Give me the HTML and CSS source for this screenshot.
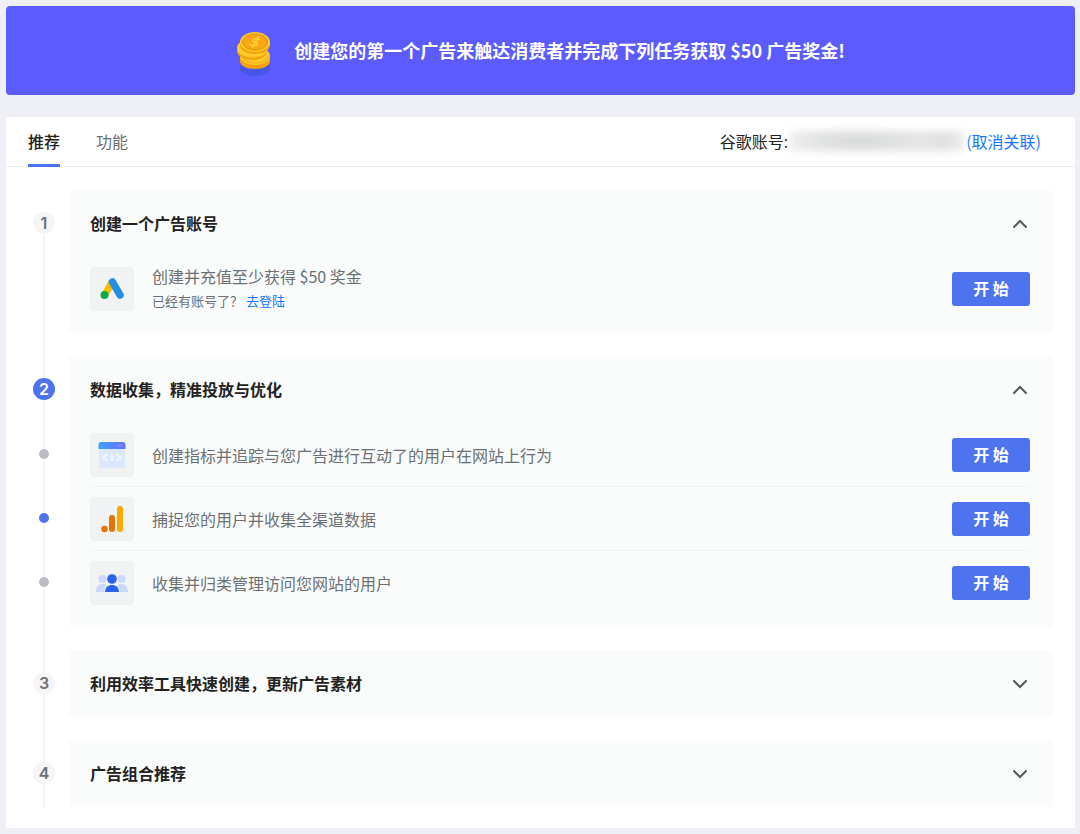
FILE: index.html
```html
<!DOCTYPE html>
<html lang="zh-CN">
<head>
    <meta charset="UTF-8">
    <meta name="viewport" content="width=device-width, initial-scale=1.0">
    <title>广告任务</title>
    <link rel="stylesheet" href="styles.css">
</head>
<body>

    <header class="banner">
        <svg class="coins" width="36" height="52" viewBox="-1 -6 36 52" aria-hidden="true">
            <ellipse cx="18" cy="37" rx="15" ry="8" fill="#4656e8"/>
            <path d="M3 26v4c0 4.500 6.500 8 15 8s15-3.500 15-8v-5z" fill="#f9a10a"/>
            <ellipse cx="18" cy="25" rx="15" ry="9" fill="#fdc92b"/>
            <path d="M5 25c1.500 4 6 7 13 7s13-3 14-8" fill="none" stroke="#f9a714" stroke-width="1"/>
            <path d="M0 18v2c0 5 6.500 9 15 9s15-4 15-9v-2z" fill="#f9a10a"/>
            <ellipse cx="15.500" cy="17" rx="15.500" ry="9.500" fill="#fdc92b"/>
            <path d="M3 11v3c0 5 6.500 9 15 9s15-4 15-9v-3z" fill="#f9a10a"/>
            <ellipse cx="18" cy="11" rx="15" ry="10" fill="#fdc92b"/>
            <ellipse cx="18" cy="11" rx="12.500" ry="8" fill="#f9a714" stroke="#dd930f" stroke-width="1"/>
            <path d="M22.500 9c-1.500-2-6-1.700-6.500.6-.4 2 5 1.200 4.600 3.500-.4 2-5 2.200-7.500.2M21.500 6l-6 10" fill="none" stroke="#ffce35" stroke-width="1.600" stroke-linecap="round"/>
        </svg>
        <h1>创建您的第一个广告来触达消费者并完成下列任务获取 $50 广告奖金!</h1>
    </header>

    <main class="card">
        <div class="toolbar">
            <nav class="tabs">
                <a class="tab active" href="#recommend">推荐</a>
                <a class="tab" href="#features">功能</a>
            </nav>
            <div class="account">
                <span>谷歌账号:</span>
                <span class="account-mask"></span>
                <a href="#unlink">(取消关联)</a>
            </div>
        </div>

        <div class="steps">
            <section class="step">
                <div class="rail">
                    <div class="rail-head"><span class="number">1</span></div>
                </div>
                <div class="panel">
                    <div class="panel-head">
                        <h2>创建一个广告账号</h2>
                        <button class="toggle" type="button" aria-label="收起" aria-expanded="true">
                            <svg width="20" height="20" viewBox="0 0 20 20"><path d="M4 13l6-6 6 6"/></svg>
                        </button>
                    </div>
                    <div class="task">
                        <span class="icon">
                            <svg width="28" height="28" viewBox="0 0 28 28">
                                <path d="M13.500 8L7 19.500" stroke="#fbbc04" stroke-width="7" stroke-linecap="round"/>
                                <path d="M14.500 7L22 20" stroke="#258ee5" stroke-width="7.500" stroke-linecap="round"/>
                                <circle cx="6.500" cy="20" r="4" fill="#0cab47"/>
                            </svg>
                        </span>
                        <div class="task-text">
                            <p>创建并充值至少获得 $50 奖金</p>
                            <p class="hint">已经有账号了？ <a href="#login">去登陆</a></p>
                        </div>
                        <button class="start" type="button">开 始</button>
                    </div>
                </div>
            </section>

            <section class="step">
                <div class="rail">
                    <div class="rail-head"><span class="number current">2</span></div>
                    <div class="rail-dot"><span class="dot"></span></div>
                    <div class="rail-dot"><span class="dot current"></span></div>
                    <div class="rail-dot"><span class="dot"></span></div>
                </div>
                <div class="panel">
                    <div class="panel-head">
                        <h2>数据收集，精准投放与优化</h2>
                        <button class="toggle" type="button" aria-label="收起" aria-expanded="true">
                            <svg width="20" height="20" viewBox="0 0 20 20"><path d="M4 13l6-6 6 6"/></svg>
                        </button>
                    </div>
                    <div class="task">
                        <span class="icon">
                            <svg width="28" height="28" viewBox="0 0 28 28">
                                <defs>
                                    <linearGradient id="bar" x1="0" y1="0" x2="1" y2="0">
                                        <stop offset="0" stop-color="#42a0ff"/>
                                        <stop offset="1" stop-color="#6272fa"/>
                                    </linearGradient>
                                </defs>
                                <rect x="1" y="2" width="26" height="25" rx="3" fill="#d9e7ff"/>
                                <path d="M.500 8V4a3 3 0 0 1 3-3h21a3 3 0 0 1 3 3v4z" fill="url(#bar)"/>
                                <circle cx="20.500" cy="4.500" r="1" fill="#a99be0"/>
                                <circle cx="23.500" cy="4.500" r="1" fill="#a99be0"/>
                                <path d="M9.500 13l-4.500 3.500 4.500 3.500M14 13v7M18.500 13l4.500 3.500-4.500 3.500" fill="none" stroke="#f3f7ff" stroke-width="2"/>
                            </svg>
                        </span>
                        <div class="task-text">
                            <p>创建指标并追踪与您广告进行互动了的用户在网站上行为</p>
                        </div>
                        <button class="start" type="button">开 始</button>
                    </div>
                    <div class="task">
                        <span class="icon">
                            <svg width="28" height="28" viewBox="0 0 28 28">
                                <rect x="19" y="1" width="6" height="26" rx="3" fill="#fbab00"/>
                                <rect x="11" y="10" width="6" height="17" rx="3" fill="#e47404"/>
                                <circle cx="6.500" cy="24" r="3.200" fill="#e47404"/>
                            </svg>
                        </span>
                        <div class="task-text">
                            <p>捕捉您的用户并收集全渠道数据</p>
                        </div>
                        <button class="start" type="button">开 始</button>
                    </div>
                    <div class="task">
                        <span class="icon">
                            <svg width="32" height="20" viewBox="0 0 32 20">
                                <circle cx="6.500" cy="6" r="4" fill="#ccd9ff"/>
                                <circle cx="25.500" cy="6" r="4" fill="#ccd9ff"/>
                                <path d="M0 19c0-4.500 2.500-8 6.500-8 1.800 0 3 .6 4 1.600C8.500 14.500 8 17 8 19zM32 19c0-4.500-2.500-8-6.500-8-1.800 0-3 .6-4 1.600C23.500 14.500 24 17 24 19z" fill="#ccd9ff"/>
                                <circle cx="16" cy="6" r="4.800" fill="#2c62ec"/>
                                <path d="M9 19c0-4.500 3-7 7-7s7 2.500 7 7z" fill="#2c62ec"/>
                            </svg>
                        </span>
                        <div class="task-text">
                            <p>收集并归类管理访问您网站的用户</p>
                        </div>
                        <button class="start" type="button">开 始</button>
                    </div>
                </div>
            </section>

            <section class="step">
                <div class="rail">
                    <div class="rail-head"><span class="number">3</span></div>
                </div>
                <div class="panel collapsed">
                    <div class="panel-head">
                        <h2>利用效率工具快速创建，更新广告素材</h2>
                        <button class="toggle" type="button" aria-label="展开" aria-expanded="false">
                            <svg width="20" height="20" viewBox="0 0 20 20"><path d="M4 7l6 6 6-6"/></svg>
                        </button>
                    </div>
                </div>
            </section>

            <section class="step">
                <div class="rail">
                    <div class="rail-head"><span class="number">4</span></div>
                </div>
                <div class="panel collapsed">
                    <div class="panel-head">
                        <h2>广告组合推荐</h2>
                        <button class="toggle" type="button" aria-label="展开" aria-expanded="false">
                            <svg width="20" height="20" viewBox="0 0 20 20"><path d="M4 7l6 6 6-6"/></svg>
                        </button>
                    </div>
                </div>
            </section>
        </div>
    </main>

</body>
</html>
```
FILE: styles.css
```css
* {
    box-sizing: border-box;
}
body {
    margin: 0;
    padding: 6px 5px 5px 6px;
    background: #eff0f6;
    font-family: "Noto Sans CJK SC", sans-serif;
    font-size: 16px;
    line-height: 24px;
    color: #222;
}
h1, h2, p {
    margin: 0;
}
a {
    color: #1677ff;
    text-decoration: none;
}
button {
    font-family: inherit;
    border: none;
    padding: 0;
    cursor: pointer;
}
.banner {
    display: flex;
    justify-content: center;
    align-items: center;
    gap: 22px;
    height: 89px;
    margin-bottom: 22px;
    background: #5b5bff;
    border-radius: 4px;
    color: #fff;
}
.banner h1 {
    padding-bottom: 2px;
    font-size: 18px;
    font-weight: 700;
}
.coins {
    flex: none;
}
.card {
    background: #fff;
}
.toolbar {
    display: flex;
    justify-content: space-between;
    height: 50px;
    padding: 0 34px 0 22px;
    border-bottom: 1px solid #ebedf0;
}
.tabs {
    display: flex;
    gap: 36px;
}
.tab {
    height: 50px;
    line-height: 48px;
    color: #6b7075;
}
.tab.active {
    color: #222;
    font-weight: 500;
    border-bottom: 3px solid #4e73ee;
}
.account {
    display: flex;
    align-items: center;
    padding-bottom: 1px;
}
.account-mask {
    width: 174px;
    height: 20px;
    margin: 0 2px;
    border-radius: 4px;
    background: linear-gradient(90deg, #ededed, #e0e1e1 20%, #d9dada 40%, #e0e1e1 60%, #e5e5e5 75%, #dfe0e0 88%, #ececec);
    filter: blur(4px);
}
.steps {
    padding: 23px 22px 21px 27px;
}
.step {
    display: flex;
    gap: 14px;
}
/* vertical line behind the numbers */
.rail {
    flex: none;
    width: 22px;
    background: linear-gradient(#f3f4f5, #f3f4f5) center / 2px 100% no-repeat;
}
.step:first-child .rail {
    background: linear-gradient(transparent 34px, #f3f4f5 34px) center / 2px 100% no-repeat;
}
.rail-head {
    display: flex;
    align-items: center;
    height: 66px;
}
.number {
    width: 22px;
    height: 22px;
    border-radius: 50%;
    background: #f5f5f6;
    color: #6b7075;
    font-family: Inter, sans-serif;
    font-size: 16px;
    font-weight: 600;
    line-height: 22px;
    text-align: center;
}
.number.current {
    background: #4e73ee;
    color: #fff;
}
.rail-dot {
    display: flex;
    justify-content: center;
    align-items: center;
    height: 64px;
}
.dot {
    width: 10px;
    height: 10px;
    border-radius: 50%;
    background: #b9bdc2;
}
.dot.current {
    background: #4e73ee;
}
.panel {
    flex: 1;
    min-width: 0;
    margin-bottom: 23px;
    padding: 0 23px 13px 21px;
    background: #fafcfb;
    border-radius: 3px;
}
.panel.collapsed {
    padding-bottom: 0;
}
.step:last-child .panel {
    margin-bottom: 0;
}
.panel-head {
    display: flex;
    justify-content: space-between;
    align-items: center;
    height: 67px;
}
.panel-head h2 {
    padding-bottom: 2px;
    font-size: 16px;
    font-weight: 700;
}
.toggle {
    width: 20px;
    height: 20px;
    background: none;
}
.toggle svg {
    display: block;
    fill: none;
    stroke: #555759;
    stroke-width: 2;
    stroke-linecap: round;
}
.task {
    display: flex;
    align-items: center;
    gap: 18px;
    min-height: 64px;
    border-bottom: 1px solid #eff1f2;
}
.task:last-child {
    min-height: 63px;
    border-bottom: none;
}
.icon {
    display: flex;
    flex: none;
    justify-content: center;
    align-items: center;
    width: 44px;
    height: 44px;
    background: #f1f2f4;
    border-radius: 4px;
}
.task-text {
    flex: 1;
    color: #6b7075;
}
.hint {
    font-size: 13px;
    line-height: 26px;
}
.start {
    flex: none;
    width: 78px;
    height: 34px;
    padding-bottom: 2px;
    background: #4e73ee;
    border-radius: 3px;
    color: #fff;
    font-size: 16px;
    font-weight: 700;
}
```
